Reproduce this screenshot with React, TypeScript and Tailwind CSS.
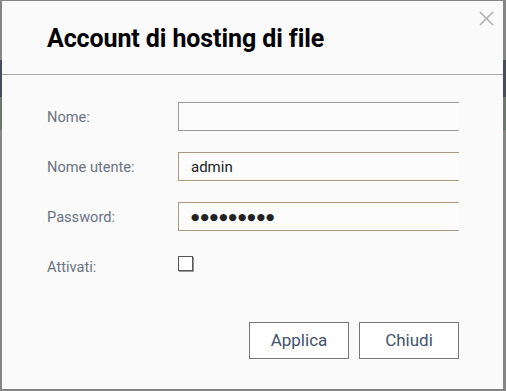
import React from 'react';

const fields = [
  { label: 'Nome:', value: '', dots: false, filled: false },
  { label: 'Nome utente:', value: 'admin', dots: false, filled: true },
  { label: 'Password:', value: '●●●●●●●●●', dots: true, filled: true },
];

export default function App() {
  return (
    <div className="w-[506px] h-[391px] pt-[1px] pb-[2px] pl-[2px] pr-[3px] bg-[linear-gradient(to_bottom,#858585_0px,#858585_60px,#474d5a_60px,#474d5a_97px,#6c786c_97px,#6c786c_130px,#858585_130px)] font-['Roboto',sans-serif]">
      <div className="relative h-full bg-[#fafafa] flex flex-col">
        <button className="absolute right-[9px] top-[10px] text-[#b0b0b0]">
          <svg width="15" height="15" viewBox="0 0 15 15" stroke="currentColor" strokeWidth="1.6" fill="none">
            <path d="M1 1L14 14M14 1L1 14" />
          </svg>
        </button>

        <div className="h-[74px] border-b border-[#a9a9a9] pl-[45px] pt-[23px]">
          <h2 className="text-[25px] leading-[30px] font-bold text-black tracking-[-0.1px]">
            Account di hosting di file
          </h2>
        </div>

        <div className="flex flex-col pl-[45px] pt-[27px] gap-[21px]">
          {fields.map((f) => (
            <div key={f.label} className="flex items-center h-[29px]">
              <label className="w-[131px] pt-[3px] text-[14.6px] text-[#6b7383]">{f.label}</label>
              <div className="w-[281px] h-[29px] overflow-hidden">
                <input
                  type="text"
                  readOnly={f.dots}
                  defaultValue={f.value}
                  className={`w-[300px] h-[29px] px-[12px] bg-[#fcfcfc] outline-none border ${
                    f.dots
                      ? "font-['DejaVu_Sans',sans-serif] text-[9.5px] tracking-[1.1px] text-[#222]"
                      : 'text-[15px] text-[#222]'
                  } ${f.filled ? 'border-[#a89a7e]' : 'border-[#9a9a9a]'}`}
                />
              </div>
            </div>
          ))}

          <div className="flex items-center h-[29px]">
            <label className="w-[131px] pt-[3px] text-[14.6px] text-[#6b7383]">Attivati:</label>
            <span className="w-[15px] h-[15px] mb-[7px] border border-[#555] bg-white shadow-[1px_1px_0_#999]" />
          </div>
        </div>

        <div className="flex justify-end gap-[10px] pr-[44px] mt-auto mb-[30px]">
          <button className="w-[100px] h-[37px] border border-[#777] bg-white text-[17px] text-[#40536d]">
            Applica
          </button>
          <button className="w-[100px] h-[37px] border border-[#777] bg-white text-[17px] text-[#40536d]">
            Chiudi
          </button>
        </div>
      </div>
    </div>
  );
}
